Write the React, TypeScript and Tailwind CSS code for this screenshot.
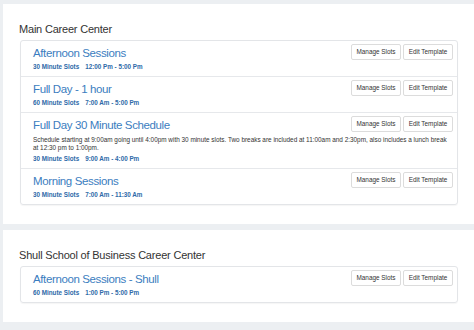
import React from 'react'

// ── Data ──────────────────────────────────────────────────────────────────────

type Template = {
  name: string
  slots: string
  hours: string
  description?: string[]
}

type Center = {
  name: string
  templates: Template[]
}

const CENTERS: Center[] = [
  {
    name: 'Main Career Center',
    templates: [
      { name: 'Afternoon Sessions', slots: '30 Minute Slots', hours: '12:00 Pm - 5:00 Pm' },
      { name: 'Full Day - 1 hour', slots: '60 Minute Slots', hours: '7:00 Am - 5:00 Pm' },
      {
        name: 'Full Day 30 Minute Schedule',
        slots: '30 Minute Slots',
        hours: '9:00 Am - 4:00 Pm',
        description: [
          'Schedule starting at 9:00am going until 4:00pm with 30 minute slots. Two breaks are included at 11:00am and 2:30pm, also includes a lunch break',
          'at 12:30 pm to 1:00pm.',
        ],
      },
      { name: 'Morning Sessions', slots: '30 Minute Slots', hours: '7:00 Am - 11:30 Am' },
    ],
  },
  {
    name: 'Shull School of Business Career Center',
    templates: [
      { name: 'Afternoon Sessions - Shull', slots: '60 Minute Slots', hours: '1:00 Pm - 5:00 Pm' },
    ],
  },
]

// ── Template Row ──────────────────────────────────────────────────────────────

function TemplateRow({ t }: { t: Template }) {
  return (
    <div className="border-b border-[#e6e8eb] pl-[12px] pr-[4px] pt-[5px] pb-[5px] last:border-b-0">
      <div className="flex items-start">
        <div className="min-w-0 flex-1 text-[11.5px] leading-[14px] tracking-[-0.38px] text-[#3b7dc0]">
          {t.name}
        </div>
        <div className="mt-[-2px] flex gap-[2px]">
          <button className="h-[16px] w-[50px] rounded-[2px] border border-[#dcdcdc] bg-white text-[6.4px] text-[#333]">
            Manage Slots
          </button>
          <button className="h-[16px] w-[50px] rounded-[2px] border border-[#dcdcdc] bg-white text-[6.4px] text-[#333]">
            Edit Template
          </button>
        </div>
      </div>
      {t.description && (
        <p className="mt-[4px] mb-[1px] text-[6.4px] leading-[8px] text-[#333]">
          {t.description.map((line) => (
            <span key={line} className="block">
              {line}
            </span>
          ))}
        </p>
      )}
      <div className="mt-[3px] flex gap-[6px] text-[6.3px] font-bold leading-[8px] text-[#2d69a8]">
        <span>{t.slots}</span>
        <span>{t.hours}</span>
      </div>
    </div>
  )
}

// ── Center Card ───────────────────────────────────────────────────────────────

function CenterCard({ center }: { center: Center }) {
  return (
    <section className="bg-white pl-[17px] pr-[16px] pt-[18px] pb-[19px]">
      <h2 className="ml-[-1px] text-[11px] leading-[14px] tracking-[-0.2px] text-[#333]">{center.name}</h2>
      <div className="mt-[4px] rounded-[3px] border border-[#e3e5e8] shadow-[0_1px_1px_rgba(0,0,0,0.04)]">
        {center.templates.map((t) => (
          <TemplateRow key={t.name} t={t} />
        ))}
      </div>
    </section>
  )
}

export default function App() {
  return (
    <div
      className="min-h-[330px] w-[474px] bg-[#eceff2] pl-[3px] pt-[4px]"
      style={{ fontFamily: '"Liberation Sans", Arial, sans-serif' }}
    >
      <div className="flex flex-col gap-[6px]">
        {CENTERS.map((c) => (
          <CenterCard key={c.name} center={c} />
        ))}
      </div>
    </div>
  )
}
